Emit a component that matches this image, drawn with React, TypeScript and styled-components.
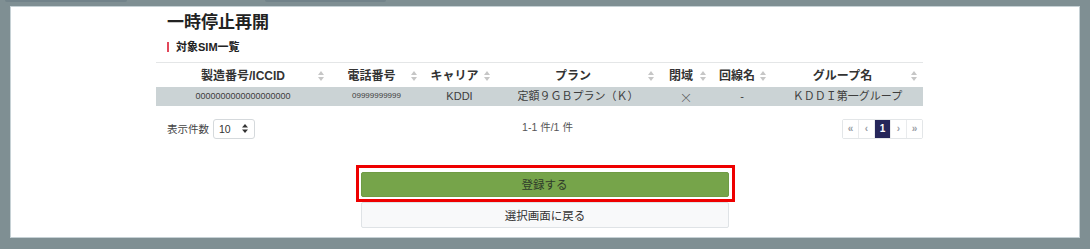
import styled, { createGlobalStyle } from "styled-components"

const GlobalStyle = createGlobalStyle`
  html, body {
    margin: 0;
    padding: 0;
    background: #7f8f93;
    font-family: "Liberation Sans", "Noto Sans CJK JP", sans-serif;
    color: #333;
  }
`

const columns = [
  { title: "製造番号/ICCID", width: 174, value: "0000000000000000000", size: 9 },
  { title: "電話番号", width: 93, value: "09999999999", size: 8 },
  { title: "キャリア", width: 73, value: "KDDI", size: 11 },
  { title: "プラン", width: 164, value: "定額９ＧＢプラン（Ｋ）", size: 11 },
  { title: "閉域", width: 52, value: "×", size: 13, thin: true },
  { title: "回線名", width: 60, value: "-", size: 11 },
  { title: "グループ名", width: 151, value: "ＫＤＤＩ第一グループ", size: 11 },
]

const pages = [
  { label: "«", active: false },
  { label: "‹", active: false },
  { label: "1", active: true },
  { label: "›", active: false },
  { label: "»", active: false },
]

function SortIcon() {
  return (
    <SortSvg width="6" height="10" viewBox="0 0 6 10">
      <path d="M3 0 L6 4 L0 4 Z" fill="#c6c6c6" />
      <path d="M3 10 L6 6 L0 6 Z" fill="#c6c6c6" />
    </SortSvg>
  )
}

export default function App() {
  return (
    <>
      <GlobalStyle />
      <Page>
        <TopEdge>
          <EdgeShade $width={122} />
          <EdgeShade $width={121} />
        </TopEdge>
        <Panel>
          <Content>
            <Title>一時停止再開</Title>
            <SubTitle>対象SIM一覧</SubTitle>
            <Table>
              <colgroup>
                {columns.map((c) => (
                  <col key={c.title} style={{ width: c.width }} />
                ))}
              </colgroup>
              <thead>
                <tr>
                  {columns.map((c) => (
                    <Th key={c.title}>
                      {c.title}
                      <SortIcon />
                    </Th>
                  ))}
                </tr>
              </thead>
              <tbody>
                <DataRow>
                  {columns.map((c) => (
                    <Td key={c.title} $size={c.size} $thin={!!c.thin}>
                      {c.value}
                    </Td>
                  ))}
                </DataRow>
              </tbody>
            </Table>
            <Footer>
              <LengthBox>
                表示件数
                <Select>
                  10
                  <svg width="6" height="9" viewBox="0 0 6 9">
                    <path d="M3 0 L6 3.5 L0 3.5 Z" fill="#333" />
                    <path d="M3 9 L6 5.5 L0 5.5 Z" fill="#333" />
                  </svg>
                </Select>
              </LengthBox>
              <Info>1-1 件/1 件</Info>
              <Pager>
                {pages.map((p, i) => (
                  <PageItem key={i} $active={p.active}>
                    {p.label}
                  </PageItem>
                ))}
              </Pager>
            </Footer>
          </Content>
          <ButtonArea>
            <Highlight>
              <SubmitButton>登録する</SubmitButton>
            </Highlight>
            <BackButton>選択画面に戻る</BackButton>
          </ButtonArea>
        </Panel>
      </Page>
    </>
  )
}

const Page = styled.div`
  width: 1090px;
  height: 249px;
  box-sizing: border-box;
  padding: 0 10px 11px 10px;
  display: flex;
  flex-direction: column;
`
const TopEdge = styled.div`
  height: 6px;
  display: flex;
  gap: 138px;
  margin-left: -5px;
`
const EdgeShade = styled.div<{ $width: number }>`
  width: ${(p) => p.$width}px;
  height: 2px;
  background: #72838a;
  border-radius: 0 0 2px 2px;
`
const Panel = styled.div`
  flex: 1;
  background: #ffffff;
  border: 1px solid #c6d1d5;
  padding-bottom: 9px;
  display: flex;
  flex-direction: column;
`
const Content = styled.div`
  width: 767px;
  margin-left: 145px;
`
const Title = styled.h1`
  margin: 4px 0 0 11px;
  font-size: 17px;
  line-height: 24px;
  font-weight: bold;
  color: #222;
`
const SubTitle = styled.h2`
  margin: 4px 0 0 11px;
  font-size: 11px;
  line-height: 16px;
  font-weight: bold;
  color: #222;
  display: flex;
  align-items: center;
  &::before {
    content: "";
    width: 2px;
    height: 10px;
    background: #e2475a;
    margin-right: 7px;
  }
`
const Table = styled.table`
  margin-top: 7px;
  width: 767px;
  table-layout: fixed;
  border-collapse: collapse;
`
const Th = styled.th`
  position: relative;
  height: 24px;
  box-sizing: border-box;
  border-top: 1px solid #e4e6e7;
  padding: 0 14px 0 4px;
  font-size: 12px;
  font-weight: bold;
  text-align: center;
  color: #333;
  white-space: nowrap;
  &:first-child {
    padding: 0 6px 0 6px;
  }
`
const SortSvg = styled.svg`
  position: absolute;
  right: 6px;
  top: 8px;
`
const DataRow = styled.tr`
  background: #cbd3d5;
`
const Td = styled.td<{ $size: number; $thin: boolean }>`
  height: 19px;
  padding: 0 4px;
  text-align: center;
  font-size: ${(p) => p.$size}px;
  line-height: 1;
  font-family: ${(p) =>
    p.$thin ? `"Noto Sans CJK JP", sans-serif` : "inherit"};
  font-weight: ${(p) => (p.$thin ? 300 : "normal")};
  color: ${(p) => (p.$thin ? "#555" : "#3d3d3d")};
  white-space: nowrap;
`
const Footer = styled.div`
  margin-top: 13px;
  display: grid;
  grid-template-columns: 1fr auto 1fr;
  align-items: center;
  height: 20px;
`
const LengthBox = styled.div`
  display: flex;
  align-items: center;
  gap: 4px;
  margin-left: 11px;
  font-size: 10.5px;
  color: #444;
`
const Select = styled.div`
  width: 42px;
  height: 20px;
  box-sizing: border-box;
  border: 1px solid #d5d9dc;
  border-radius: 3px;
  display: flex;
  align-items: center;
  justify-content: space-between;
  padding: 0 6px 0 5px;
  font-size: 10.5px;
  color: #333;
`
const Info = styled.div`
  font-size: 10.5px;
  color: #555;
  padding: 0 0 4px 16px;
`
const Pager = styled.div`
  justify-self: end;
  display: flex;
  border: 1px solid #e3e6e8;
  border-radius: 2px;
`
const PageItem = styled.div<{ $active: boolean }>`
  width: 15px;
  height: 18px;
  display: flex;
  align-items: center;
  justify-content: center;
  font-size: 10px;
  font-weight: bold;
  color: ${(p) => (p.$active ? "#ffffff" : "#9aa0a6")};
  background: ${(p) => (p.$active ? "#26265a" : "#ffffff")};
  & + & {
    border-left: 1px solid #e9ebed;
  }
`
const ButtonArea = styled.div`
  margin-top: 26px;
  display: flex;
  flex-direction: column;
  align-items: center;
`
const Highlight = styled.div`
  border: 3px solid #ee0000;
  padding: 4px 3px 2px 2px;
`
const SubmitButton = styled.div`
  width: 368px;
  height: 25px;
  box-sizing: border-box;
  border-radius: 2px;
  border: 1px solid #6f9b44;
  background: #76a44a;
  display: flex;
  align-items: center;
  justify-content: center;
  font-size: 11.5px;
  color: #2f3b2a;
`
const BackButton = styled.div`
  width: 368px;
  height: 26px;
  box-sizing: border-box;
  border-radius: 2px;
  border: 1px solid #dfe3e6;
  background: #f8f9fa;
  display: flex;
  align-items: center;
  justify-content: center;
  font-size: 11.5px;
  color: #333;
`
